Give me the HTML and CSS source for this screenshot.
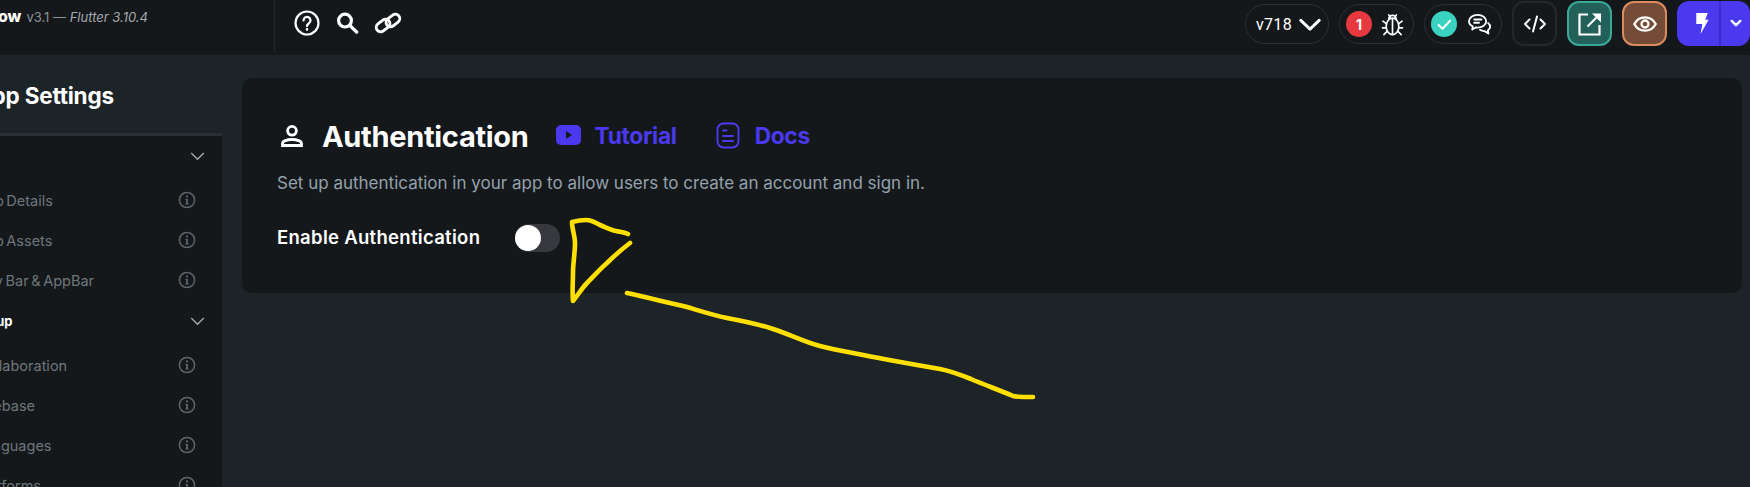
FILE: index.html
```html
<!DOCTYPE html>
<html lang="en">
<head>
<meta charset="utf-8">
<title>App Settings - Authentication</title>
<link rel="stylesheet" href="styles.css">
</head>
<body>
<div class="page">
  <header class="topbar">
    <div class="brand">
      <span class="brand-name">FlutterFlow</span>
      <span class="brand-version">v3.1 — <em>Flutter 3.10.4</em></span>
    </div>
    <div class="tools">
      <svg class="tool-help" viewBox="0 0 24 24" width="26" height="26" fill="none" stroke="#fff" stroke-width="2" stroke-linecap="round"><circle cx="12" cy="12" r="10.6"/><path d="M8.8 9.6a3.2 3.2 0 1 1 5 2.6c-1.2.8-1.8 1.4-1.8 2.6" stroke-width="2.1"/><circle cx="12" cy="17.9" r=".7" fill="#fff" stroke-width="1"/></svg>
      <svg viewBox="0 0 24 24" width="24" height="24" fill="none" stroke="#fff" stroke-linecap="round"><circle cx="10" cy="9.6" r="6.4" stroke-width="3.2"/><path d="M15 14.6l6.6 6.4" stroke-width="3.4"/></svg>
      <svg viewBox="0 0 28 24" width="28" height="24" fill="none" stroke="#fff" stroke-width="2.9"><rect x="1.6" y="10.2" width="15" height="8.8" rx="4.4" transform="rotate(-38 9 14.6)"/><rect x="11.4" y="5" width="15" height="8.8" rx="4.4" transform="rotate(-38 19 9.4)"/></svg>
    </div>
    <div class="actions">
      <div class="pill pill-version"><span>v718</span>
        <svg viewBox="0 0 24 14" width="22" height="13" fill="none" stroke="#fff" stroke-width="3.2" stroke-linecap="round" stroke-linejoin="round"><path d="M2 2.5l10 9.5 10-9.5"/></svg>
      </div>
      <div class="pill pill-status">
        <span class="dot dot-red">1</span>
        <svg viewBox="0 0 24 26" width="23" height="25" fill="none" stroke="#fff" stroke-width="1.7" stroke-linecap="round"><ellipse cx="12" cy="15" rx="6.6" ry="8.6"/><path d="M12 6.5v17M8 7.5a4 4 0 0 1 8 0M8 3l1.6 2.4M16 3l-1.6 2.4M5.4 12L2 9.5M18.6 12L22 9.5M5 16.5H1.5M19 16.5h3.5M6 20.5l-3 3M18 20.5l3 3"/></svg>
      </div>
      <div class="pill pill-status pill-chat">
        <span class="dot dot-teal"><svg viewBox="0 0 16 16" width="17" height="17" fill="none" stroke="#fff" stroke-width="1.9" stroke-linecap="round" stroke-linejoin="round"><path d="M2.5 8.4l3.6 3.6 7.2-7.6"/></svg></span>
        <svg viewBox="0 0 26 24" width="25" height="23" fill="none" stroke="#fff" stroke-width="1.9" stroke-linecap="round" stroke-linejoin="round"><path d="M11 2c5 0 9 2.9 9 6.6s-4 6.6-9 6.6l-2-.1-3.6 2.2.6-3.4C3.500 12.800 2 10.800 2 8.600 2 4.900 6 2 11 2z"/><path d="M7.500 6.800h7.500M7.500 10.200h5"/><path d="M22 10.500c1.500 1.200 2.200 2.600 2 4.200-.2 1.400-1 2.500-2.200 3.300l.5 3.400-4-2.500c-1.800.1-3.500-.4-4.800-1.300"/></svg>
      </div>
      <div class="square square-code">
        <svg viewBox="0 0 24 18" width="24" height="18" fill="none" stroke="#fff" stroke-width="2" stroke-linecap="round" stroke-linejoin="round"><path d="M6.500 4.500L2 9l4.500 4.500M17.500 4.500L22 9l-4.500 4.500M14 1.500L10 16.500"/></svg>
      </div>
      <div class="square square-open">
        <svg viewBox="0 0 24 24" width="24" height="24" fill="none" stroke="#fff" stroke-width="2.2"><path d="M10 2.500H1.500v20h20V13"/><path d="M9.500 14.500L21 3"/><path d="M14 1.500h9v9z" fill="#fff" stroke="none"/></svg>
      </div>
      <div class="square square-eye">
        <svg viewBox="0 0 24 16" width="24" height="16" fill="none" stroke="#fff" stroke-width="2.300"><path d="M1.300 8C3.500 3.800 7.300 1.300 12 1.300S20.500 3.800 22.700 8c-2.200 4.200-6 6.700-10.700 6.700S3.500 12.200 1.300 8z"/><circle cx="12" cy="8" r="3.500"/></svg>
      </div>
      <div class="run">
        <div class="run-main"><svg viewBox="0 0 14 22" width="14" height="21" fill="#fff"><path d="M1 0h12l-2.600 7H14L5.500 22l1.800-10.500H1z"/></svg></div>
        <div class="run-more"><svg viewBox="0 0 14 10" width="12" height="9" fill="none" stroke="#fff" stroke-width="2.800" stroke-linecap="round" stroke-linejoin="round"><path d="M2 2l5 5 5-5"/></svg></div>
      </div>
    </div>
  </header>

  <div class="main">
    <aside class="sidebar">
      <div class="side-title"><h2>App Settings</h2></div>
      <nav class="side-list">
        <div class="group">General<svg class="chev" viewBox="0 0 16 10" width="15" height="9"><path d="M1 1l7 7 7-7"/></svg></div>
        <div class="item"><span>App Details</span><svg class="info" viewBox="0 0 18 18"><use href="#i-info"/></svg></div>
        <div class="item"><span>App Assets</span><svg class="info" viewBox="0 0 18 18"><use href="#i-info"/></svg></div>
        <div class="item"><span>Nav Bar &amp; AppBar</span><svg class="info" viewBox="0 0 18 18"><use href="#i-info"/></svg></div>
        <div class="group group-second">Project Setup<svg class="chev" viewBox="0 0 16 10" width="15" height="9"><path d="M1 1l7 7 7-7"/></svg></div>
        <div class="item"><span>Collaboration</span><svg class="info" viewBox="0 0 18 18"><use href="#i-info"/></svg></div>
        <div class="item"><span>Firebase</span><svg class="info" viewBox="0 0 18 18"><use href="#i-info"/></svg></div>
        <div class="item"><span>Languages</span><svg class="info" viewBox="0 0 18 18"><use href="#i-info"/></svg></div>
        <div class="item"><span>Platforms</span><svg class="info" viewBox="0 0 18 18"><use href="#i-info"/></svg></div>
      </nav>
    </aside>

    <section class="content">
      <div class="card">
        <div class="card-head">
          <svg class="person" viewBox="0 0 24 24" width="24" height="24" fill="none" stroke="#fff" stroke-width="2.800"><circle cx="12" cy="6.800" r="4.400"/><path d="M2.500 21.500v-2c0-2.300 4.300-4 9.500-4s9.500 1.700 9.500 4v2z"/></svg>
          <h1>Authentication</h1>
          <a class="link link-tutorial">
            <svg viewBox="0 0 25 20" width="25" height="20"><rect width="25" height="20" rx="5" fill="#4b39ef"/><path d="M10 6l6 4-6 4z" fill="#14181b"/></svg>
            <span class="link-text">Tutorial</span>
          </a>
          <a class="link link-docs">
            <svg viewBox="0 0 24 27" width="24" height="27" fill="none" stroke="#4b39ef" stroke-width="1.900" stroke-linecap="round"><rect x="1.500" y="1.500" width="21" height="24" rx="6"/><path d="M7 8.500h3.500M7 14h10M7 19h10"/></svg>
            <span class="link-text">Docs</span>
          </a>
        </div>
        <p class="desc">Set up authentication in your app to allow users to create an account and sign in.</p>
        <div class="toggle-row">
          <span class="toggle-label">Enable Authentication</span>
          <span class="toggle"><span class="knob"></span></span>
        </div>
      </div>
    </section>
  </div>

  <svg class="scribble" viewBox="0 0 1750 487" width="1750" height="487" fill="none" stroke="#ffe000" stroke-width="4.600" stroke-linecap="round" stroke-linejoin="round">
    <path d="M628 234c-4-2-8-2-12-3-6-1-11-4-16-6-5-3-10-5-14-5-5 0-10 1-14 2 0 7 3 14 3 21 0 10-2 20-2 30 0 9-1 19 0 28 5-6 9-13 14-18 7-7 13-14 20-20 7-7 15-14 23-20"/>
    <path d="M627 293c19 4 38 9 56 13 15 4 29 9 44 12 16 3 31 6 46 11 16 5 31 13 47 17 11 3 22 5 33 7 29 6 58 11 87 16 11 2 21 6 31 10 14 6 28 11 42 17 4 1 10 1 20 1"/>
  </svg>

  <svg class="defs" width="0" height="0">
    <symbol id="i-info" viewBox="0 0 18 18"><circle cx="9" cy="9" r="7.600" fill="none" stroke="currentColor" stroke-width="1.500"/><circle cx="9" cy="5.400" r="1.100" fill="currentColor"/><path d="M9 8v5" fill="none" stroke="currentColor" stroke-width="1.900"/><path d="M7.300 8.300H9M7.300 13h3.400" fill="none" stroke="currentColor" stroke-width="1"/></symbol>
  </svg>
</div>
</body>
</html>
```
FILE: styles.css
```css
* { box-sizing: border-box; }
html, body { margin: 0; padding: 0; }
body {
  background: #1d2428;
  color: #fff;
  font-family: "Inter", "Liberation Sans", sans-serif;
}
.page {
  position: relative;
  width: 1750px;
  height: 487px;
  overflow: hidden;
  display: flex;
  flex-direction: column;
}
.topbar {
  flex: 0 0 55px;
  background: #14181b;
  display: flex;
  align-items: flex-start;
}
.brand {
  flex: 0 0 275px;
  height: 52px;
  display: flex;
  justify-content: flex-end;
  align-items: baseline;
  gap: 5px;
  padding: 6px 126px 0 0;
  overflow: hidden;
  white-space: nowrap;
  border-right: 1px solid #23272c;
}
.brand-name { font-size: 16px; font-weight: 800; }
.brand-version { font-size: 13px; color: #8b9298; }
.brand-version em { color: #a3a9ae; }
.tools {
  display: flex;
  align-items: center;
  gap: 15px;
  padding: 10px 0 0 19px;
}
.actions {
  margin-left: auto;
  display: flex;
  align-items: flex-start;
  gap: 10px;
  padding-top: 1px;
}
.pill {
  height: 40px;
  margin-top: 3px;
  border: 1px solid #2b3036;
  border-radius: 20px;
  display: flex;
  align-items: center;
}
.pill-version {
  width: 84px;
  padding-left: 10px;
  gap: 7px;
  font-size: 16px;
  font-family: "Roboto", sans-serif;
  letter-spacing: .3px;
}
.pill-status {
  width: 75px;
  padding-left: 6px;
  gap: 9px;
}
.pill-chat { width: 78px; gap: 10px; }
.dot {
  flex: 0 0 26px;
  height: 26px;
  border-radius: 50%;
  display: flex;
  align-items: center;
  justify-content: center;
  font-size: 14px;
  font-weight: 700;
}
.dot-red { background: #e5393f; }
.dot-teal { background: #39d2c0; }
.square {
  width: 45px;
  height: 45px;
  border-radius: 12px;
  display: flex;
  align-items: center;
  justify-content: center;
}
.square-code { border: 2px solid #22272c; }
.square-open { background: #23605a; border: 2px solid #3aa899; }
.square-eye { background: #744b37; border: 2px solid #da8c60; }
.run {
  width: 73px;
  height: 45px;
  border-radius: 12px;
  background: #4b39ef;
  display: flex;
}
.run-main {
  flex: 0 0 44px;
  display: flex;
  align-items: center;
  justify-content: center;
  padding-left: 8px;
  border-right: 2px solid #3a2cc4;
}
.run-more {
  flex: 1;
  display: flex;
  align-items: center;
  justify-content: center;
}
.main {
  flex: 1;
  display: flex;
  min-height: 0;
}
.sidebar {
  flex: 0 0 222px;
  overflow: hidden;
  background: #14181b;
  display: flex;
  flex-direction: column;
}
.side-title {
  flex: 0 0 81px;
  background: #1d2428;
  border-bottom: 3px solid #2b3037;
  display: flex;
  align-items: flex-start;
  padding: 26px 0 0;
}
.side-title h2 {
  margin: 0 0 0 -25px;
  font-size: 22.500px;
  line-height: 30px;
  font-weight: 700;
  letter-spacing: -.2px;
  white-space: nowrap;
}
.side-list {
  width: 222px;
  padding: 0;
}
.group, .item {
  display: flex;
  align-items: center;
  justify-content: space-between;
  white-space: nowrap;
}
.group {
  height: 40px;
  margin-left: -73px;
  padding-right: 17px;
  font-size: 13px;
  font-weight: 700;
}
.group-second { margin-top: 1px; }
.group + .item { margin-top: 4px; }
.item {
  height: 40px;
  margin-left: -24px;
  padding-right: 26px;
  font-size: 14.500px;
  word-spacing: -1.500px;
  color: #6e767c;
}
.chev { fill: none; stroke: #a3a9ae; stroke-width: 1.500; }
.info { width: 18px; height: 18px; color: #5d6469; }
.content {
  flex: 1;
  padding: 23px 8px 0 20px;
}
.card {
  height: 215px;
  background: #14181b;
  border-radius: 10px;
  padding: 42px 35px 0;
}
.card-head {
  display: flex;
  align-items: center;
  height: 30px;
}
.person { margin: 2px 0 0 3px; }
.card-head h1 {
  margin: 2px 0 0 18px;
  font-size: 29px;
  font-weight: 700;
  letter-spacing: -.3px;
  white-space: nowrap;
}
.link {
  display: flex;
  align-items: center;
  gap: 14px;
  color: #4b39ef;
  font-size: 22.700px;
  font-weight: 700;
  letter-spacing: -.3px;
}
.link-text { margin-bottom: -1px; }
.link-tutorial { margin-left: 27px; }
.link-docs { margin-left: 39px; gap: 15px; }
.desc {
  margin: 21px 0 0;
  font-size: 17px;
  line-height: 24px;
  color: #95a1ac;
  white-space: nowrap;
}
.toggle-row {
  display: flex;
  align-items: center;
  margin-top: 29px;
}
.toggle-label {
  flex: 0 0 238px;
  margin-top: -2px;
  font-size: 18.500px;
  font-weight: 600;
  letter-spacing: .3px;
  white-space: nowrap;
}
.toggle {
  width: 45px;
  height: 28px;
  border-radius: 14px;
  background: #38393f;
  display: flex;
  align-items: center;
}
.knob {
  width: 26px;
  height: 26px;
  border-radius: 50%;
  background: #fff;
}
.scribble {
  position: absolute;
  left: 0;
  top: 0;
  pointer-events: none;
}
.defs { position: absolute; }
```
